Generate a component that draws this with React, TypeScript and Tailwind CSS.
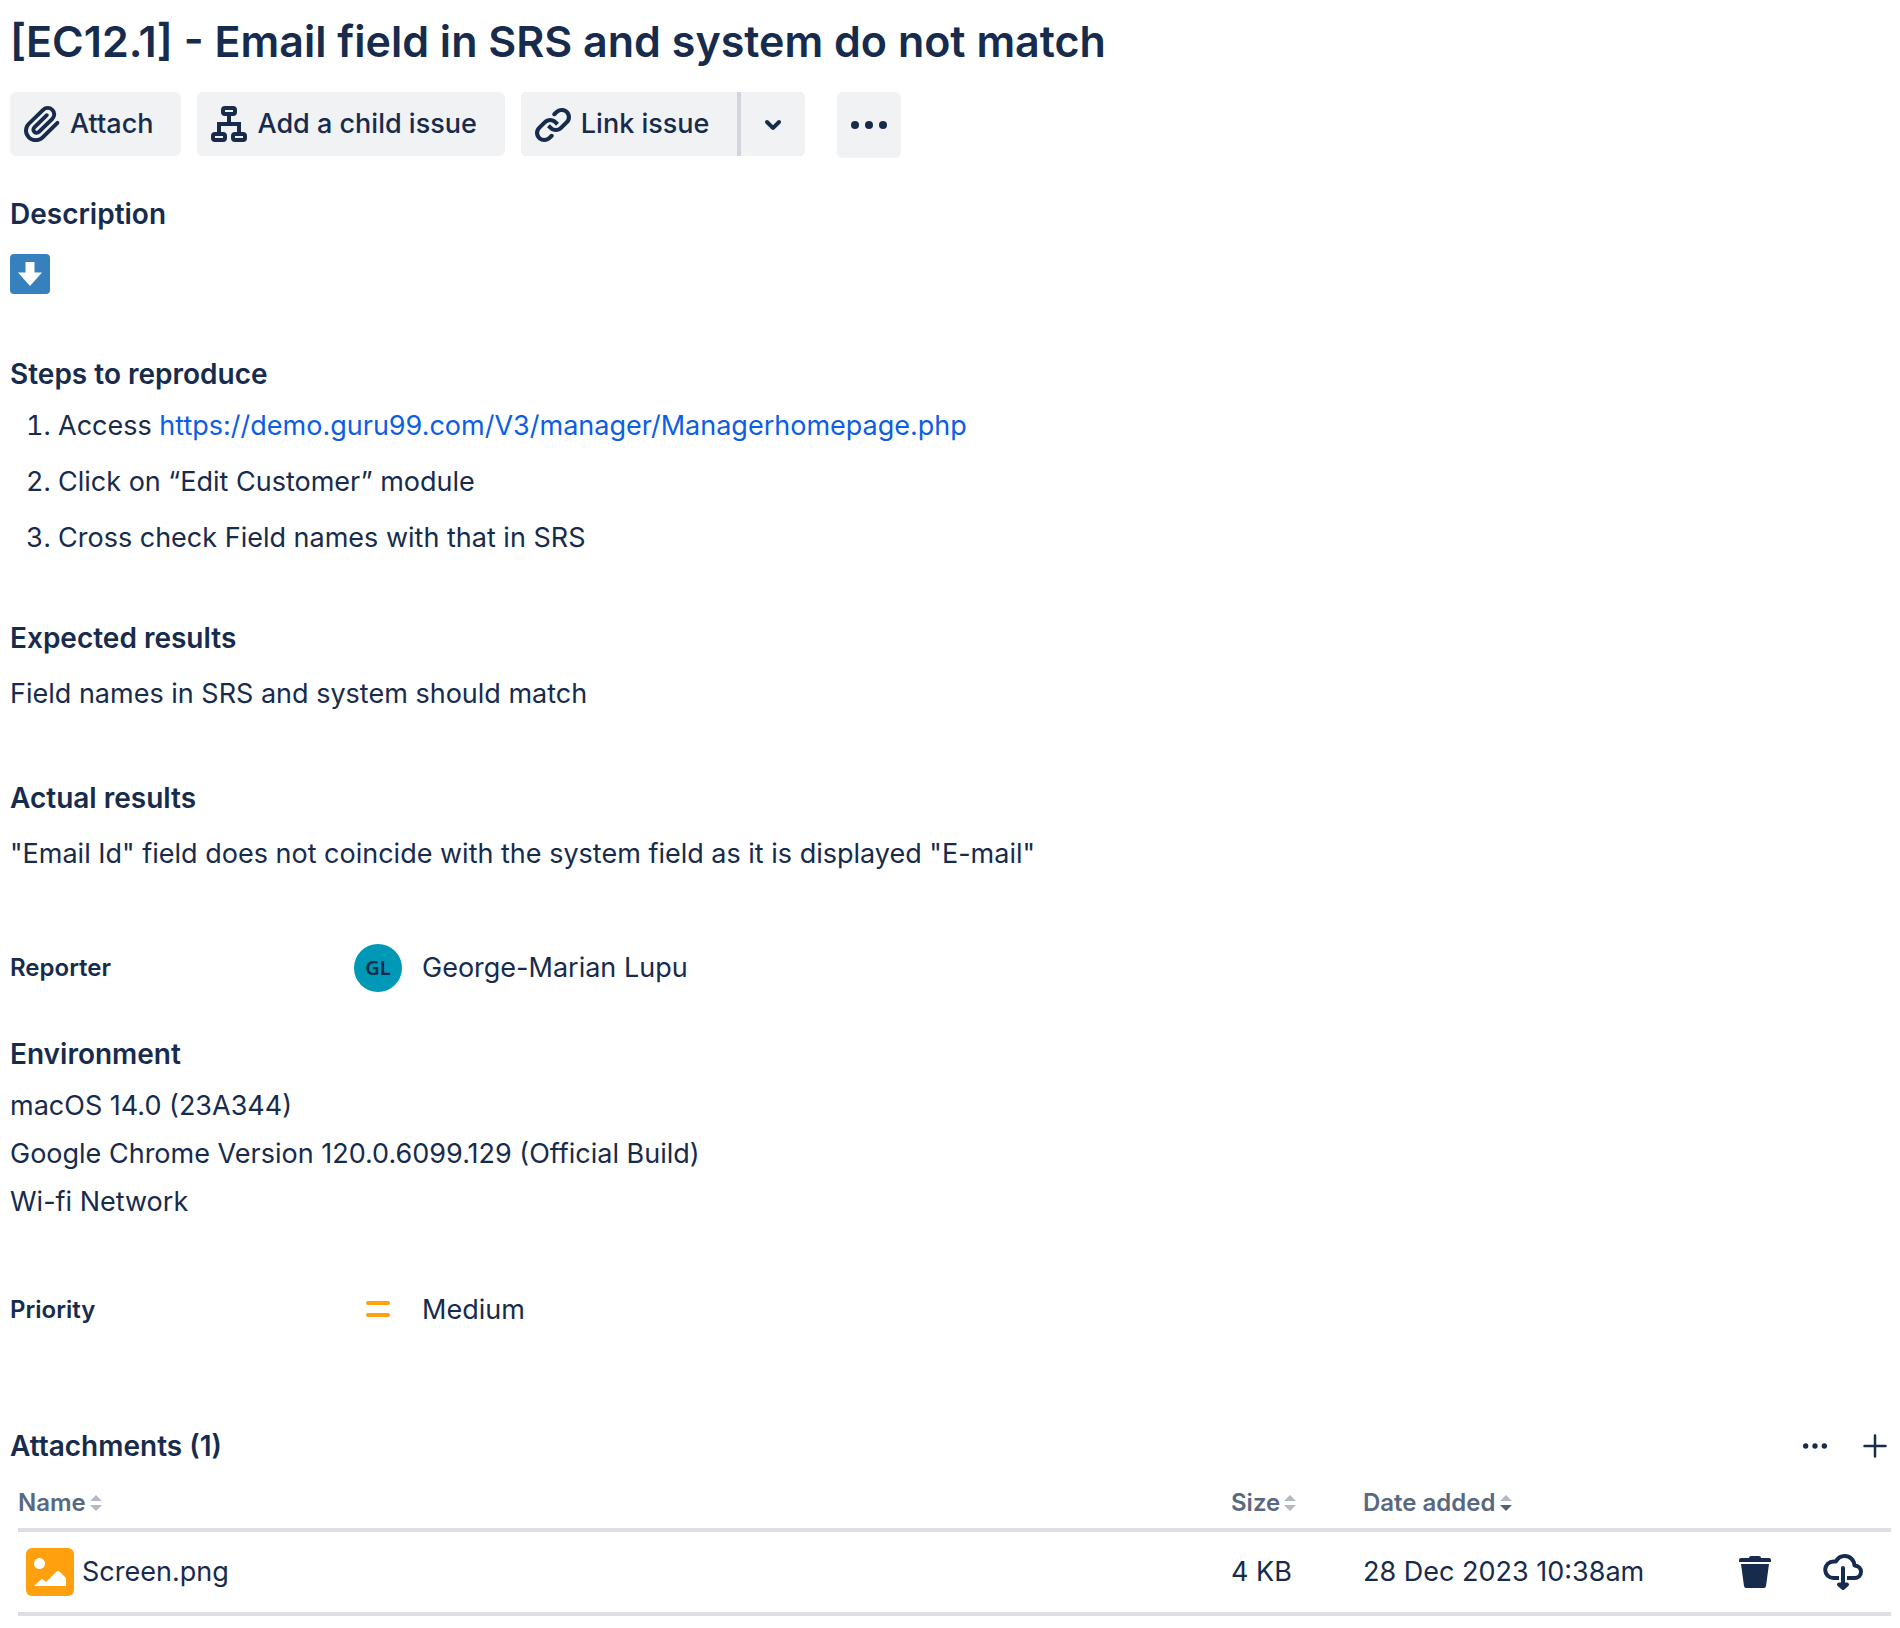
import React from "react";

const ink = "#172b4d";

function AttachIcon() {
  return (
    <svg width="48" height="48" viewBox="0 0 24 24" fill={ink} aria-hidden="true">
      <path d="M11.643 17.965c-1.53 1.495-4.016 1.496-5.542.004a3.773 3.773 0 0 1 .002-5.412l7.147-6.985a2.316 2.316 0 0 1 3.22-.004c.893.873.895 2.282.004 3.153l-6.703 6.55a.653.653 0 0 1-.914-.008.62.62 0 0 1 0-.902l6.229-6.087a.941.941 0 0 0 0-1.353.995.995 0 0 0-1.384 0l-6.23 6.087a2.502 2.502 0 0 0 0 3.607 2.643 2.643 0 0 0 3.683.009l6.703-6.55a4.074 4.074 0 0 0-.003-5.859 4.306 4.306 0 0 0-5.986 0l-7.148 6.985a5.655 5.655 0 0 0 0 8.118c2.29 2.24 6.02 2.24 8.31 0l7.373-7.204a.941.941 0 0 0 0-1.353.995.995 0 0 0-1.384 0l-7.377 7.204z" />
    </svg>
  );
}

function ChildIssueIcon() {
  return (
    <svg width="48" height="48" viewBox="0 0 48 48" fill="none" stroke={ink} strokeWidth="4" aria-hidden="true">
      <rect x="18" y="8" width="12" height="6" rx="2" />
      <rect x="8" y="34" width="12" height="6" rx="2" />
      <rect x="28" y="34" width="12" height="6" rx="2" />
      <path d="M24 14v10M14 34V24h20v10" />
    </svg>
  );
}

function LinkIcon() {
  return (
    <svg width="48" height="48" viewBox="0 0 24 24" fill={ink} aria-hidden="true">
      <path d="M12.856 5.457l-.937.92a1.002 1.002 0 0 0 0 1.437 1.047 1.047 0 0 0 1.463 0l.984-.966c.967-.95 2.542-1.135 3.602-.288a2.54 2.54 0 0 1 .203 3.81l-2.903 2.852a2.646 2.646 0 0 1-3.696 0l-1.11-1.09L9 13.57l1.108 1.089c1.822 1.788 4.802 1.788 6.622 0l2.905-2.852a4.558 4.558 0 0 0-.357-6.82c-1.893-1.517-4.695-1.226-6.422.47" />
      <path d="M11.144 19.543l.937-.92a1.002 1.002 0 0 0 0-1.437 1.047 1.047 0 0 0-1.462 0l-.985.966c-.967.95-2.542 1.135-3.602.288a2.54 2.54 0 0 1-.203-3.81l2.903-2.852a2.646 2.646 0 0 1 3.696 0l1.11 1.09L15 11.43l-1.108-1.089c-1.822-1.788-4.802-1.788-6.622 0l-2.905 2.852a4.558 4.558 0 0 0 .357 6.82c1.893 1.517 4.695 1.226 6.422-.47" />
    </svg>
  );
}

function ChevronDownIcon() {
  return (
    <svg width="48" height="48" viewBox="0 0 24 24" fill={ink} aria-hidden="true">
      <path d="M8.292 10.293a1.009 1.009 0 0 0 0 1.419l2.939 2.965c.218.215.5.322.779.322s.556-.107.769-.322l2.93-2.955a1.01 1.01 0 0 0 0-1.419.987.987 0 0 0-1.406 0l-2.298 2.317-2.307-2.327a.99.99 0 0 0-1.406 0z" />
    </svg>
  );
}

function DotsIcon({ size }: { size: number }) {
  return (
    <svg width={size} height={size} viewBox="0 0 48 48" fill={ink} aria-hidden="true">
      <circle cx="10" cy="24" r="4" />
      <circle cx="24" cy="24" r="4" />
      <circle cx="38" cy="24" r="4" />
    </svg>
  );
}

function PlusIcon() {
  return (
    <svg width="24" height="24" viewBox="0 0 24 24" stroke={ink} strokeWidth="2.5" strokeLinecap="round" aria-hidden="true">
      <path d="M12 1.500v21M1.500 12h21" />
    </svg>
  );
}

function DownArrowEmoji() {
  return (
    <svg width="40" height="40" viewBox="0 0 40 40" role="img" aria-label="Down arrow">
      <rect width="40" height="40" rx="4" fill="#3580bd" />
      <path d="M15.500 8h9v10.500H32L20 32 8 18.500h7.500z" fill="#fff" />
    </svg>
  );
}

function ImageFileIcon() {
  return (
    <svg width="48" height="48" viewBox="0 0 48 48" aria-hidden="true">
      <rect width="48" height="48" rx="6" fill="#ffa00f" />
      <circle cx="13.500" cy="15.500" r="5.500" fill="#fff" />
      <path d="M8 38l7-6.500q1-1 2 0l3 2.500 10.500-10.500q1.500-1.200 3 0L40 30v8z" fill="#fff" />
    </svg>
  );
}

function TrashIcon() {
  return (
    <svg width="48" height="48" viewBox="0 0 48 48" fill={ink} aria-hidden="true">
      <path d="M8 14v-2q0-2 2-2h8q0-2 2-2h8q2 0 2 2h8q2 0 2 2v2zM10 16h28l-3 22q-.3 2-2 2H15q-1.700 0-2-2z" />
    </svg>
  );
}

function DownloadIcon() {
  return (
    <svg width="48" height="48" viewBox="0 0 48 48" fill="none" stroke={ink} strokeWidth="4" strokeLinecap="round" strokeLinejoin="round" aria-hidden="true">
      <path
        d="M20 30h-5.500a8.300 8.300 0 0 1 0-16.600h2.500c1.800-3.400 5-5.400 8.700-5.400 5.300 0 9.500 4 9.800 9.500 3.800.3 6.500 3 6.500 6.300 0 3.500-2.800 6.200-6.500 6.200H28"
        strokeLinecap="butt"
      />
      <path d="M24 20v18" />
      <path d="M20 36.500l4 3.500 4-3.500z" fill={ink} />
    </svg>
  );
}

function SortIcon({ down = "#b3b9c4" }: { down?: string }) {
  return (
    <svg width="12" height="16" viewBox="0 0 12 16" aria-hidden="true">
      <path d="M0 6l6-6 6 6z" fill="#b3b9c4" />
      <path d="M0 10l6 6 6-6z" fill={down} />
    </svg>
  );
}

function Heading({ children }: { children: React.ReactNode }) {
  return <h2 className="text-[28px] leading-10 font-semibold">{children}</h2>;
}

const button = "flex h-16 items-center gap-1 bg-[#f1f2f4] pr-7 pl-2 font-medium";

export default function App() {
  return (
    <main className="min-h-screen bg-white pt-4 pr-[9px] pl-[10px] font-['Inter','Liberation_Sans',sans-serif] text-[27px] leading-12 text-[#172b4d]">
      <h1 className="text-[43px] leading-[50px] font-semibold">[EC12.1] - Email field in SRS and system do not match</h1>

      <div className="mt-[26px] flex items-start gap-4">
        <button type="button" className={`${button} rounded-md`}>
          <AttachIcon />
          Attach
        </button>
        <button type="button" className={`${button} rounded-md`}>
          <ChildIssueIcon />
          Add a child issue
        </button>
        <div className="mr-4 flex gap-1 overflow-hidden rounded-md bg-[#d2d5db]">
          <button type="button" className={button}>
            <LinkIcon />
            Link issue
          </button>
          <button type="button" aria-label="More link options" className="flex h-16 w-16 items-center justify-center bg-[#f1f2f4]">
            <ChevronDownIcon />
          </button>
        </div>
        <button type="button" aria-label="More actions" className="flex h-[66px] w-16 items-center justify-center rounded-md bg-[#f1f2f4]">
          <DotsIcon size={48} />
        </button>
      </div>

      <section className="mt-9">
        <Heading>Description</Heading>
        <div className="mt-5">
          <DownArrowEmoji />
        </div>
      </section>

      <section className="mt-[60px]">
        <Heading>Steps to reproduce</Heading>
        <ol className="mt-2 list-decimal space-y-2 pl-12">
          <li>
            Access{" "}
            <a href="https://demo.guru99.com/V3/manager/Managerhomepage.php" className="text-[#0c5ee5]">
              https://demo.guru99.com/V3/manager/Managerhomepage.php
            </a>
          </li>
          <li>Click on “Edit Customer” module</li>
          <li>Cross check Field names with that in SRS</li>
        </ol>
      </section>

      <section className="mt-14">
        <Heading>Expected results</Heading>
        <p className="mt-3">Field names in SRS and system should match</p>
      </section>

      <section className="mt-[60px]">
        <Heading>Actual results</Heading>
        <p className="mt-3">"Email Id" field does not coincide with the system field as it is displayed "E-mail"</p>
      </section>

      <dl className="mt-[66px] flex items-center">
        <dt className="w-[344px] text-2xl font-semibold">Reporter</dt>
        <dd className="flex items-center gap-5">
          <span className="flex size-12 items-center justify-center rounded-full bg-[#0098b7] font-['Noto_Sans',sans-serif] text-xl font-semibold">GL</span>
          George-Marian Lupu
        </dd>
      </dl>

      <section className="mt-[42px]">
        <Heading>Environment</Heading>
        <p className="mt-2">macOS 14.0 (23A344)</p>
        <p>Google Chrome Version 120.0.6099.129 (Official Build)</p>
        <p>Wi-fi Network</p>
      </section>

      <dl className="mt-[60px] flex items-center">
        <dt className="w-[344px] text-2xl font-semibold">Priority</dt>
        <dd className="flex items-center gap-5">
          <svg width="48" height="48" viewBox="0 0 48 48" fill="#ffa00f" aria-hidden="true">
            <rect x="12" y="15" width="24" height="4" rx="2" />
            <rect x="12" y="27" width="24" height="4" rx="2" />
          </svg>
          Medium
        </dd>
      </dl>

      <section className="mt-[92px]">
        <div className="flex items-center justify-between">
          <Heading>Attachments (1)</Heading>
          <div className="flex items-center gap-8 pr-1">
            <button type="button" aria-label="Attachment options">
              <DotsIcon size={32} />
            </button>
            <button type="button" aria-label="Add attachment">
              <PlusIcon />
            </button>
          </div>
        </div>
        <div className="mt-3 pl-2">
          <table className="w-full table-fixed text-left">
            <colgroup>
              <col />
              <col className="w-[132px]" />
              <col className="w-[352px]" />
              <col className="w-[176px]" />
            </colgroup>
            <thead className="text-2xl text-[#596881]">
              <tr className="h-[52px] border-b-4 border-[#dcdee3]">
                <th className="font-semibold">
                  <button type="button" className="flex items-center gap-1">Name <SortIcon /></button>
                </th>
                <th className="font-semibold">
                  <button type="button" className="flex items-center gap-1">Size <SortIcon /></button>
                </th>
                <th className="font-semibold">
                  <button type="button" className="flex items-center gap-1">Date added <SortIcon down="#505f79" /></button>
                </th>
                <th aria-label="Actions" />
              </tr>
            </thead>
            <tbody>
              <tr className="h-[84px] border-b-4 border-[#dcdee3]">
                <td>
                  <span className="flex items-center gap-2 pl-2"><ImageFileIcon />Screen.png</span>
                </td>
                <td>4 KB</td>
                <td>28 Dec 2023 10:38am</td>
                <td>
                  <span className="flex items-center justify-between pr-6 pl-4">
                    <button type="button" aria-label="Delete Screen.png"><TrashIcon /></button>
                    <button type="button" aria-label="Download Screen.png"><DownloadIcon /></button>
                  </span>
                </td>
              </tr>
            </tbody>
          </table>
        </div>
      </section>
    </main>
  );
}
